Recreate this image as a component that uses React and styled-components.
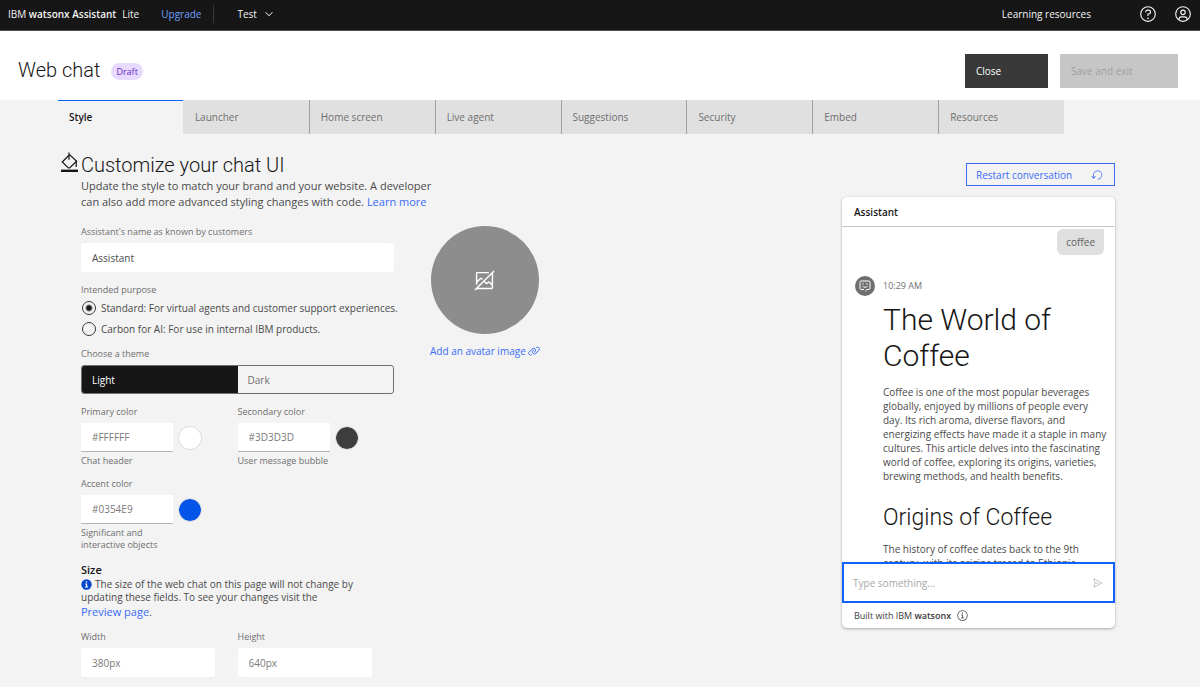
import React, { useState } from 'react';
import styled, { createGlobalStyle } from 'styled-components';

const GlobalStyle = createGlobalStyle`
  *, *::before, *::after { box-sizing: border-box; }
  body {
    margin: 0;
    background: #f3f3f3;
    color: #161616;
    font-family: "Open Sans", "Liberation Sans", sans-serif;
    font-size: 10px;
    line-height: 14px;
  }
  h1, h2, h3, p, fieldset { margin: 0; padding: 0; border: 0; font-weight: 400; }
  legend { padding: 0; }
  button, input { font: inherit; }
`;

const colors = {
  blue: '#0f62fe',
  link: '#3a6cf6',
  text: '#161616',
  secondary: '#4a4a4a',
  muted: '#6f6f6f',
};

const displayFont = 'Roboto, "Liberation Sans", sans-serif';

/* ---------- icons ---------- */

const Glyph = styled.svg`
  display: block;
  flex: none;
  width: ${(p) => p.$size}px;
  height: ${(p) => p.$size}px;
`;

const Icon = ({ size, children }) => (
  <Glyph $size={size} viewBox="0 0 32 32" fill="currentColor" aria-hidden="true">
    {children}
  </Glyph>
);

const ChevronDown = () => (
  <Icon size={12}><path d="M16 22L6 12l1.400-1.400L16 19.200l8.600-8.600L26 12z" /></Icon>
);
const Help = () => (
  <Icon size={18}>
    <path d="M16,2A14,14,0,1,0,30,16,14,14,0,0,0,16,2Zm0,26A12,12,0,1,1,28,16,12,12,0,0,1,16,28Z" />
    <circle cx="16" cy="23.500" r="1.500" />
    <path d="M17,8H15.500A4.490,4.490,0,0,0,11,12.490V13h2v-.5A2.500,2.500,0,0,1,15.500,10H17a2.500,2.500,0,0,1,0,5H15v4.500h2V17a4.500,4.500,0,0,0,0-9Z" />
  </Icon>
);
const UserAvatar = () => (
  <Icon size={18}>
    <path d="M16,8a5,5,0,1,0,5,5A5,5,0,0,0,16,8Zm0,8a3,3,0,1,1,3-3A3,3,0,0,1,16,16Z" />
    <path d="M16,2A14,14,0,1,0,30,16,14,14,0,0,0,16,2ZM10,26.380V25a3,3,0,0,1,3-3h6a3,3,0,0,1,3,3v1.380a11.900,11.900,0,0,1-12,0Zm13.990-1.450A5,5,0,0,0,19,20H13a5,5,0,0,0-4.990,4.930,12,12,0,1,1,15.980,0Z" />
  </Icon>
);
const SendIcon = () => (
  <Icon size={12}>
    <path d="M27.450,15.110l-22-11a1,1,0,0,0-1.080.12,1,1,0,0,0-.33,1L7,16,4,26.740A1,1,0,0,0,5,28a1,1,0,0,0,.45-.11l22-11a1,1,0,0,0,0-1.780Zm-20.900,10L8.760,17H18V15H8.760L6.550,6.890,24.760,16Z" />
  </Icon>
);
const LinkIcon = () => (
  <Icon size={12}>
    <path d="M29.250,6.760a6,6,0,0,0-8.500,0l1.420,1.420a4,4,0,1,1,5.670,5.670l-8,8a4,4,0,1,1-5.670-5.660l1.410-1.420-1.410-1.420-1.420,1.420a6,6,0,0,0,0,8.500A6,6,0,0,0,17,25a6,6,0,0,0,4.270-1.760l8-8A6,6,0,0,0,29.250,6.760Z" />
    <path d="M4.190,24.820a4,4,0,0,1,0-5.670l8-8a4,4,0,0,1,5.670,0A3.940,3.940,0,0,1,19,14a4,4,0,0,1-1.170,2.850L15.710,19l1.420,1.420,2.120-2.120a6,6,0,0,0-8.510-8.510l-8,8a6,6,0,0,0,0,8.510A6,6,0,0,0,7,28a6.070,6.070,0,0,0,4.280-1.760L9.860,24.820A4,4,0,0,1,4.190,24.820Z" />
  </Icon>
);
const NoImage = () => (
  <Icon size={23}>
    <path d="M30,3.414,28.586,2,2,28.586,3.414,30l2-2H26a2,2,0,0,0,2-2V5.414ZM26,26H7.414l7.793-7.793,2.379,2.379a2,2,0,0,0,2.828,0L22,19l4,3.997Zm0-5.832-2.586-2.586a2,2,0,0,0-2.828,0L19,19.168l-2.377-2.377L26,7.414Z" />
    <path d="M6,22V19l5-4.997,1.373,1.373,1.416-1.416-1.375-1.375a2,2,0,0,0-2.828,0L6,16.172V6H22V4H6A2,2,0,0,0,4,6V22Z" />
  </Icon>
);
const ResetIcon = () => (
  <Icon size={12}>
    <path d="M18,28A12,12,0,1,0,6,16v6.200L2.400,18.600,1,20l6,6,6-6-1.400-1.400L8,22.200V16A10,10,0,1,1,18,26Z" />
  </Icon>
);
const PaintIcon = () => (
  <Glyph $size={20} viewBox="0 0 20 20" fill="none" stroke="currentColor" strokeWidth="1.200" aria-hidden="true">
    <path d="M10.200 3L3.200 10l6.200 6 1.200 0 7-6.800-6.500-6.200z" />
    <path d="M10 0.500v7.200M17.200 9v6" />
    <path d="M2 18.800h17" strokeWidth="2.400" />
  </Glyph>
);
const InfoFilled = () => (
  <Icon size={11}>
    <circle cx="16" cy="16" r="15" fill="#0043ce" />
    <path fill="#fff" d="M14 6.500h4v4h-4zM11.500 13h6.500v9h3v3H11v-3h3.500v-6h-3z" />
  </Icon>
);
const InfoOutline = () => (
  <Icon size={11}>
    <path d="M16 1a15 15 0 1 0 0 30a15 15 0 0 0 0-30zm0 28a13 13 0 1 1 0-26a13 13 0 0 1 0 26z" />
    <path d="M14.500 7.500h3v3h-3zM12 13h5.200v9H20v2h-8v-2h3v-7h-3z" />
  </Icon>
);
const BotIcon = () => (
  <Glyph $size={12} viewBox="0 0 12 12" fill="none" stroke="currentColor" aria-hidden="true">
    <path d="M5 9.500H2.200A1.200 1.200 0 0 1 1 8.300V2.200A1.200 1.200 0 0 1 2.200 1h7.600A1.200 1.200 0 0 1 11 2.200v6.100a1.200 1.200 0 0 1-1.200 1.200H8L6.200 11.300" />
    <path d="M4 3v1.500M8 3v1.500M3.500 6.200c1.500 1.400 3.500 1.400 5 0" />
  </Glyph>
);

/* ---------- page chrome ---------- */

const Page = styled.div`
  min-height: 100vh;
`;

const TopBar = styled.header`
  display: flex;
  align-items: center;
  height: 31px;
  padding: 0 8px 3px 8px;
  background: #161616;
  border-bottom: 1px solid #525252;
  color: #f4f4f4;
`;
const Brand = styled.span`
  margin-right: 22px;
  b { font-weight: 600; }
  span { margin-left: 6px; }
`;
const UpgradeLink = styled.a`
  padding-right: 12px;
  line-height: 18px;
  border-right: 1px solid #393939;
  color: #6ea0fb;
  font-weight: 500;
  text-decoration: none;
`;
const BarButton = styled.button`
  display: flex;
  align-items: center;
  gap: 6px;
  margin-left: ${(p) => p.$before}px;
  padding: 0;
  border: 0;
  background: none;
  color: inherit;
`;
const BarEnd = styled.nav`
  display: flex;
  align-items: center;
  margin-left: auto;
`;
const BarLink = styled.a`
  color: inherit;
  text-decoration: none;
  margin-right: 30px;
`;

const TitleBar = styled.div`
  display: flex;
  align-items: center;
  height: 69px;
  padding: 11px 22px 0 18px;
  background: #fff;
`;
const PageTitle = styled.h1`
  margin-bottom: 2px;
  font-family: ${displayFont};
  font-size: 20px;
  line-height: 28px;
  && { font-weight: 300; }
`;
const Tag = styled.span`
  margin-left: 11px;
  padding: 0 5px;
  border-radius: 9px;
  background: #e8daff;
  color: #6929c4;
  font-size: 9px;
  line-height: 17px;
`;
const Actions = styled.div`
  display: flex;
  gap: 12px;
  margin-left: auto;
`;
const ActionButton = styled.button`
  width: ${(p) => p.$width}px;
  height: 34px;
  padding: 0 11px;
  border: 0;
  background: #393939;
  color: #fff;
  text-align: left;
  &:disabled { background: #c6c6c6; color: #a0a0a0; }
`;

const Tabs = styled.div`
  display: flex;
  margin: 0 136px 0 58px;
`;
const Tab = styled.button`
  flex: 1;
  height: 34px;
  padding: 0 11px;
  border: 0;
  background: #e0e0e0;
  color: ${colors.muted};
  text-align: left;
  & + & { border-left: 1px solid #a0a0a0; }
  &[aria-selected='true'] {
    background: transparent;
    box-shadow: inset 0 1px 0 ${colors.blue};
    color: ${colors.text};
    font-weight: 600;
  }
  &[aria-selected='true'] + & { border-left-color: #e0e0e0; }
`;

const Main = styled.main`
  display: flex;
  justify-content: space-between;
  padding: 18px 85px 10px 59px;
`;

/* ---------- form ---------- */

const Section = styled.section`
  display: flex;
  gap: 2px;
`;
const SectionTitle = styled.h2`
  font-family: ${displayFont};
  font-size: 20px;
  line-height: 26px;
  && { font-weight: 300; }
`;
const Intro = styled.p`
  width: 360px;
  color: ${colors.secondary};
  font-size: 11px;
  line-height: 16px;
`;
const TextLink = styled.a`
  color: ${colors.link};
  font-size: 11px;
  text-decoration: none;
`;
const Columns = styled.div`
  display: flex;
  gap: 36px;
  margin-top: 16px;
`;
const Form = styled.form`
  display: flex;
  flex-direction: column;
  width: 313px;
`;
const Label = styled.label`
  display: block;
  margin-bottom: ${(p) => (p.$tight ? 1 : 5)}px;
  color: ${colors.muted};
  font-size: 9px;
  line-height: 12px;
`;
const Field = styled.div`
  width: ${(p) => p.$width || '100%'};
`;
const TextInput = styled.input`
  display: block;
  width: 100%;
  height: 29px;
  padding: 0 11px;
  border: 0;
  border-radius: 3px;
  background: #fff;
  color: ${(p) => (p.$strong ? colors.secondary : '#7a7a7a')};
`;
const ColorInput = styled(TextInput)`
  width: 92px;
  border-bottom: 1px solid #b5b5b5;
  border-radius: 0;
`;
const Purpose = styled.fieldset`
  margin: 12px 0 9px;
`;
const RadioRow = styled.label`
  display: flex;
  align-items: center;
  gap: 5px;
  height: 21px;
  color: ${colors.secondary};
  white-space: nowrap;
`;
const Radio = styled.input`
  appearance: none;
  flex: none;
  width: 14px;
  height: 14px;
  margin: 0 0 0 1px;
  border: 1px solid #393939;
  border-radius: 50%;
  &:checked { background: radial-gradient(circle, #161616 2px, transparent 4px); }
`;
const Switcher = styled.div`
  display: flex;
  height: 29px;
  overflow: hidden;
  border: 1px solid #6f6f6f;
  border-radius: 3px;
`;
const SwitchOption = styled.button`
  flex: 1;
  padding: 0 10px;
  border: 0;
  background: transparent;
  color: ${colors.muted};
  text-align: left;
  &[aria-pressed='true'] { background: #161616; color: #fff; font-weight: 500; }
`;
const Grid = styled.div`
  display: grid;
  grid-template-columns: repeat(2, 1fr);
  row-gap: 11px;
  margin-top: ${(p) => p.$top}px;
`;
const ColorRow = styled.div`
  display: flex;
  align-items: center;
  gap: 5px;
`;
const Swatch = styled.input`
  appearance: none;
  width: 24px;
  height: 24px;
  padding: 0;
  border: 1px solid #dcdcdc;
  border-radius: 50%;
  background: none;
  &::-webkit-color-swatch-wrapper { padding: 0; }
  &::-webkit-color-swatch { border: 0; border-radius: 50%; }
`;
const Helper = styled.p`
  max-width: 100px;
  margin-top: 3px;
  color: ${colors.muted};
  font-size: 9px;
  line-height: 12px;
`;
const SizeTitle = styled.h3`
  margin-top: 11px;
  font-size: 11px;
  line-height: 16px;
  && { font-weight: 600; }
`;
const SizeNote = styled.p`
  width: 300px;
  color: ${colors.secondary};
  font-size: 10px;
  line-height: 13px;
  svg { display: inline-block; margin-right: 3px; vertical-align: -2px; }
  a { line-height: 16px; }
`;

const AvatarColumn = styled.div`
  display: flex;
  flex-direction: column;
  align-items: center;
`;
const AvatarCircle = styled.div`
  display: grid;
  place-items: center;
  width: 108px;
  height: 108px;
  margin-bottom: 10px;
  border-radius: 50%;
  background: #8d8d8d;
  color: #fff;
`;
const AvatarLink = styled.a`
  display: flex;
  align-items: center;
  gap: 2px;
  color: ${colors.link};
  text-decoration: none;
`;

/* ---------- chat preview ---------- */

const Preview = styled.aside`
  display: flex;
  flex-direction: column;
  align-items: flex-end;
  gap: 11px;
  margin-top: 11px;
`;
const RestartButton = styled.button`
  display: flex;
  align-items: center;
  justify-content: space-between;
  width: 149px;
  height: 23px;
  padding: 0 11px 0 9px;
  border: 1px solid ${colors.link};
  background: transparent;
  color: ${colors.link};
`;
const Chat = styled.div`
  width: 273px;
  overflow: hidden;
  border-radius: 5px;
  background: #fff;
  box-shadow: 0 1px 3px rgba(0, 0, 0, 0.3);
`;
const ChatHeader = styled.div`
  padding: 8px 12px 7px;
  border-bottom: 1px solid #c6c6c6;
  font-weight: 600;
`;
const Messages = styled.div`
  display: flex;
  flex-direction: column;
  height: 335px;
  padding: 2px 11px 0 13px;
  overflow: hidden;
`;
const UserBubble = styled.div`
  align-self: flex-end;
  padding: 6px 9px;
  border-radius: 6px 0 6px 6px;
  background: #e0e0e0;
  color: #5f5f5f;
`;
const BotMeta = styled.div`
  display: flex;
  align-items: center;
  gap: 8px;
  margin-top: 21px;
  color: ${colors.muted};
  font-size: 9px;
`;
const BotAvatar = styled.span`
  display: grid;
  place-items: center;
  width: 20px;
  height: 20px;
  border-radius: 50%;
  background: #6f6f6f;
  color: #fff;
`;
const Article = styled.article`
  margin-left: 28px;
  white-space: nowrap;
  h2, h3 { font-family: ${displayFont}; font-weight: 300; }
  h2 { margin-top: 6px; font-size: 30px; line-height: 36px; }
  h3 { margin: 20px 0 10px; font-size: 23px; line-height: 29px; }
  p { color: ${colors.secondary}; line-height: 14px; }
  h2 + p { margin-top: 11px; }
`;
const Composer = styled.form`
  display: flex;
  align-items: center;
  height: 41px;
  padding: 0 9px;
  border: 2px solid ${colors.blue};
`;
const MessageInput = styled.input`
  flex: 1;
  min-width: 0;
  padding: 0;
  border: 0;
  outline: 0;
  background: none;
  &::placeholder { color: #a8a8a8; opacity: 1; }
`;
const SendButton = styled.button`
  padding: 0;
  border: 0;
  background: none;
  color: #b5b5b5;
`;
const ChatFooter = styled.div`
  display: flex;
  align-items: center;
  gap: 6px;
  height: 25px;
  padding: 0 12px;
  color: #393939;
  font-size: 9px;
  b { font-weight: 600; }
`;

const tabs = ['Style', 'Launcher', 'Home screen', 'Live agent', 'Suggestions', 'Security', 'Embed', 'Resources'];

const colorFields = [
  { id: 'primary', label: 'Primary color', value: '#FFFFFF', helper: 'Chat header' },
  { id: 'secondary', label: 'Secondary color', value: '#3D3D3D', helper: 'User message bubble' },
  { id: 'accent', label: 'Accent color', value: '#0354E9', helper: 'Significant and interactive objects' },
];

function ColorField({ id, label, value, helper }) {
  const [color, setColor] = useState(value);
  return (
    <div>
      <Label htmlFor={id}>{label}</Label>
      <ColorRow>
        <ColorInput id={id} value={color} onChange={(e) => setColor(e.target.value)} />
        <Swatch
          type="color"
          aria-label={`${label} picker`}
          value={color.toLowerCase()}
          onChange={(e) => setColor(e.target.value.toUpperCase())}
        />
      </ColorRow>
      <Helper>{helper}</Helper>
    </div>
  );
}

export default function App() {
  const [tab, setTab] = useState('Style');
  const [theme, setTheme] = useState('Light');

  return (
    <Page>
      <GlobalStyle />
      <TopBar>
        <Brand>IBM <b>watsonx Assistant</b><span>Lite</span></Brand>
        <UpgradeLink href="#upgrade">Upgrade</UpgradeLink>
        <BarButton $before={23}>Test <ChevronDown /></BarButton>
        <BarEnd>
          <BarLink href="#learning">Learning resources</BarLink>
          <BarButton $before={18} aria-label="Help"><Help /></BarButton>
          <BarButton $before={17} aria-label="Account"><UserAvatar /></BarButton>
        </BarEnd>
      </TopBar>

      <TitleBar>
        <PageTitle>Web chat</PageTitle>
        <Tag>Draft</Tag>
        <Actions>
          <ActionButton $width={83}>Close</ActionButton>
          <ActionButton $width={118} disabled>Save and exit</ActionButton>
        </Actions>
      </TitleBar>

      <Tabs role="tablist">
        {tabs.map((name) => (
          <Tab key={name} role="tab" aria-selected={tab === name} onClick={() => setTab(name)}>{name}</Tab>
        ))}
      </Tabs>

      <Main>
        <Section>
          <PaintIcon />
          <div>
            <SectionTitle>Customize your chat UI</SectionTitle>
            <Intro>
              Update the style to match your brand and your website. A developer<br />
              can also add more advanced styling changes with code. <TextLink href="#learn">Learn more</TextLink>
            </Intro>
            <Columns>
              <Form>
                <Field>
                  <Label htmlFor="name">Assistant's name as known by customers</Label>
                  <TextInput id="name" $strong defaultValue="Assistant" />
                </Field>
                <Purpose>
                  <Label as="legend" $tight>Intended purpose</Label>
                  <RadioRow>
                    <Radio type="radio" name="purpose" defaultChecked />
                    Standard: For virtual agents and customer support experiences.
                  </RadioRow>
                  <RadioRow>
                    <Radio type="radio" name="purpose" />
                    Carbon for AI: For use in internal IBM products.
                  </RadioRow>
                </Purpose>
                <Label as="span" id="theme-label">Choose a theme</Label>
                <Switcher role="group" aria-labelledby="theme-label">
                  {['Light', 'Dark'].map((name) => (
                    <SwitchOption key={name} type="button" aria-pressed={theme === name} onClick={() => setTheme(name)}>
                      {name}
                    </SwitchOption>
                  ))}
                </Switcher>
                <Grid $top={12}>
                  {colorFields.map((f) => <ColorField key={f.id} {...f} />)}
                </Grid>
                <SizeTitle>Size</SizeTitle>
                <SizeNote>
                  <InfoFilled />
                  The size of the web chat on this page will not change by<br />
                  updating these fields. To see your changes visit the<br />
                  <TextLink href="#preview">Preview page</TextLink>.
                </SizeNote>
                <Grid $top={11}>
                  <Field $width="134px">
                    <Label htmlFor="width">Width</Label>
                    <TextInput id="width" defaultValue="380px" />
                  </Field>
                  <Field $width="134px">
                    <Label htmlFor="height">Height</Label>
                    <TextInput id="height" defaultValue="640px" />
                  </Field>
                </Grid>
              </Form>
              <AvatarColumn>
                <AvatarCircle><NoImage /></AvatarCircle>
                <AvatarLink href="#avatar">Add an avatar image <LinkIcon /></AvatarLink>
              </AvatarColumn>
            </Columns>
          </div>
        </Section>

        <Preview>
          <RestartButton>Restart conversation <ResetIcon /></RestartButton>
          <Chat>
            <ChatHeader>Assistant</ChatHeader>
            <Messages>
              <UserBubble>coffee</UserBubble>
              <BotMeta><BotAvatar><BotIcon /></BotAvatar>10:29 AM</BotMeta>
              <Article>
                <h2>The World of<br />Coffee</h2>
                <p>
                  Coffee is one of the most popular beverages<br />
                  globally, enjoyed by millions of people every<br />
                  day. Its rich aroma, diverse flavors, and<br />
                  energizing effects have made it a staple in many<br />
                  cultures. This article delves into the fascinating<br />
                  world of coffee, exploring its origins, varieties,<br />
                  brewing methods, and health benefits.
                </p>
                <h3>Origins of Coffee</h3>
                <p>
                  The history of coffee dates back to the 9th<br />
                  century, with its origins traced to Ethiopia.
                </p>
              </Article>
            </Messages>
            <Composer onSubmit={(e) => e.preventDefault()}>
              <MessageInput aria-label="Message" placeholder="Type something..." />
              <SendButton aria-label="Send"><SendIcon /></SendButton>
            </Composer>
            <ChatFooter><span>Built with IBM <b>watsonx</b></span><InfoOutline /></ChatFooter>
          </Chat>
        </Preview>
      </Main>
    </Page>
  );
}
